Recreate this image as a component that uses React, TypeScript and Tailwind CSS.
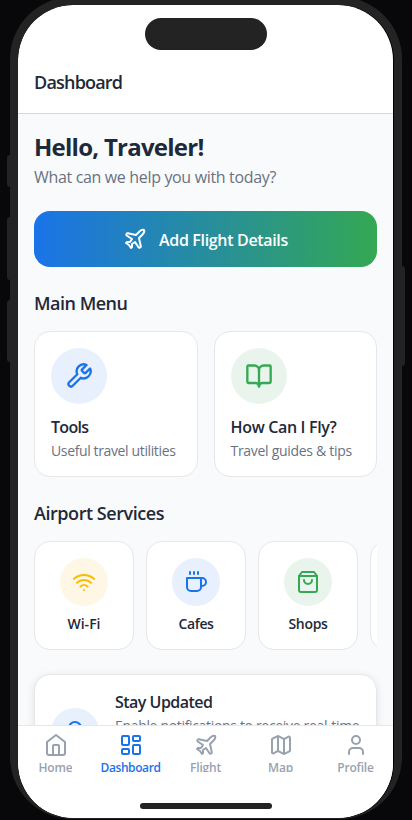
import type { ReactNode } from 'react';

const ICONS: Record<string, string[]> = {
  plane: [
    'M17.8 19.2 16 11l3.5-3.5C21 6 21.5 4 21 3c-1-.5-3 0-4.5 1.5L13 8 4.8 6.2c-.5-.1-.9.1-1.1.5l-.3.5c-.2.5-.1 1 .3 1.3L9 12l-2 3H4l-1 1 3 2 2 3 1-1v-3l3-2 3.5 5.3c.3.4.8.5 1.3.3l.5-.2c.4-.3.6-.7.5-1.2z',
  ],
  wrench: [
    'M14.7 6.3a1 1 0 0 0 0 1.4l1.6 1.6a1 1 0 0 0 1.4 0l3.77-3.77a6 6 0 0 1-7.94 7.94l-6.91 6.91a2.12 2.12 0 0 1-3-3l6.91-6.91a6 6 0 0 1 7.94-7.94l-3.76 3.76z',
  ],
  book: [
    'M12 7v14',
    'M3 18a1 1 0 0 1-1-1V4a1 1 0 0 1 1-1h5a4 4 0 0 1 4 4 4 4 0 0 1 4-4h5a1 1 0 0 1 1 1v13a1 1 0 0 1-1 1h-6a3 3 0 0 0-3 3 3 3 0 0 0-3-3z',
  ],
  wifi: ['M12 20h.01', 'M2 8.82a15 15 0 0 1 20 0', 'M5 12.859a10 10 0 0 1 14 0', 'M8.5 16.429a5 5 0 0 1 7 0'],
  coffee: ['M17 8h1a4 4 0 1 1 0 8h-1', 'M3 8h14v9a4 4 0 0 1-4 4H7a4 4 0 0 1-4-4Z', 'M6 2v2', 'M10 2v2', 'M14 2v2'],
  bag: ['M6 2 3 6v14a2 2 0 0 0 2 2h14a2 2 0 0 0 2-2V6l-3-4Z', 'M3 6h18', 'M16 10a4 4 0 0 1-8 0'],
  bell: ['M6 8a6 6 0 0 1 12 0c0 7 3 9 3 9H3s3-2 3-9', 'M10.3 21a1.94 1.94 0 0 0 3.4 0'],
  home: ['m3 9 9-7 9 7v11a2 2 0 0 1-2 2H5a2 2 0 0 1-2-2z', 'M9 22V13a1 1 0 0 1 1-1h4a1 1 0 0 1 1 1v9'],
  dashboard: [
    'M4 3h5a1 1 0 0 1 1 1v7a1 1 0 0 1-1 1H4a1 1 0 0 1-1-1V4a1 1 0 0 1 1-1z',
    'M15 3h5a1 1 0 0 1 1 1v3a1 1 0 0 1-1 1h-5a1 1 0 0 1-1-1V4a1 1 0 0 1 1-1z',
    'M15 12h5a1 1 0 0 1 1 1v7a1 1 0 0 1-1 1h-5a1 1 0 0 1-1-1v-7a1 1 0 0 1 1-1z',
    'M4 16h5a1 1 0 0 1 1 1v3a1 1 0 0 1-1 1H4a1 1 0 0 1-1-1v-3a1 1 0 0 1 1-1z',
  ],
  map: [
    'M14.106 5.553a2 2 0 0 0 1.788 0l3.659-1.83A1 1 0 0 1 21 4.619v12.764a1 1 0 0 1-.553.894l-4.553 2.277a2 2 0 0 1-1.788 0l-4.212-2.106a2 2 0 0 0-1.788 0l-3.659 1.83A1 1 0 0 1 3 19.381V6.618a1 1 0 0 1 .553-.894l4.553-2.277a2 2 0 0 1 1.788 0z',
    'M15 5.764v15',
    'M9 3.236v15',
  ],
  user: ['M19 21v-2a4 4 0 0 0-4-4H9a4 4 0 0 0-4 4v2', 'M12 3a4 4 0 1 0 0 8 4 4 0 0 0 0-8z'],
};

function Icon({ name, size = 24 }: { name: string; size?: number }) {
  return (
    <svg
      width={size}
      height={size}
      viewBox="0 0 24 24"
      fill="none"
      stroke="currentColor"
      strokeWidth={2}
      strokeLinecap="round"
      strokeLinejoin="round"
      className="shrink-0"
    >
      {ICONS[name].map((d) => (
        <path key={d} d={d} />
      ))}
    </svg>
  );
}

function MenuCard({ icon, tint, title, text }: { icon: string; tint: string; title: ReactNode; text: ReactNode }) {
  return (
    <div className="h-[146px] rounded-2xl border border-gray-200 bg-white p-4">
      <div className={`flex size-14 items-center justify-center rounded-full ${tint}`}>
        <Icon name={icon} size={28} />
      </div>
      <div className="mt-[11px] text-base leading-6 font-semibold text-gray-800">{title}</div>
      <div className="mt-px text-sm leading-[21px] text-gray-500">{text}</div>
    </div>
  );
}

function ServiceCard({ icon, tint, label }: { icon?: string; tint: string; label?: ReactNode }) {
  return (
    <div className="flex h-[109px] w-[100px] shrink-0 flex-col items-center rounded-2xl border border-gray-200 bg-white pt-4">
      <div className={`flex size-12 items-center justify-center rounded-full ${tint}`}>
        {icon && <Icon name={icon} />}
      </div>
      <div className="mt-[7px] text-sm leading-[21px] font-semibold text-gray-800">{label}</div>
    </div>
  );
}

function Tab({ icon, label, active = false }: { icon: string; label: ReactNode; active?: boolean }) {
  return (
    <div className={`flex w-[75px] flex-col items-center ${active ? 'text-[#1a73e8]' : 'text-gray-400'}`}>
      <Icon name={icon} />
      <div className="h-[15px] overflow-hidden text-xs leading-[21px] font-semibold whitespace-nowrap">{label}</div>
    </div>
  );
}

export default function App() {
  return (
    <div className="relative h-[820px] w-[412px] overflow-hidden bg-[#08080a] font-['Open_Sans','Noto_Sans',sans-serif] whitespace-nowrap">
      <div className="absolute top-[155px] left-[7px] h-8 w-2 rounded-l-[3px] bg-[#232323]" />
      <div className="absolute top-[217px] left-[7px] h-[63px] w-2 rounded-l-[3px] bg-[#232323]" />
      <div className="absolute top-[300px] left-[7px] h-[62px] w-2 rounded-l-[3px] bg-[#232323]" />
      <div className="absolute top-[266px] left-[397px] h-[100px] w-2 rounded-r-[3px] bg-[#232323]" />
      <div className="relative -mt-[3px] ml-[10px] h-[822px] w-[392px] rounded-[62px] bg-[#232323] pt-2 pl-2">
        <div className="h-[813px] w-[376px] overflow-hidden rounded-[55px] bg-black">
          <div className="relative flex h-[813px] w-[375px] flex-col overflow-hidden rounded-[55px] bg-white">
            <div className="absolute top-[13px] left-[127px] h-8 w-[122px] rounded-full bg-[#232323]" />
            <header className="flex h-[109px] shrink-0 items-end border-b border-[#d5d9dc] px-4 pb-[17px]">
              <h1 className="text-lg leading-[27px] font-semibold tracking-[-0.8px] text-gray-800">Dashboard</h1>
            </header>
            <main className="h-[611px] shrink-0 overflow-hidden bg-[#f9fafc] px-4 pt-[15px]">
              <h2 className="text-2xl leading-9 font-bold tracking-[-0.75px] text-gray-800">Hello, Traveler!</h2>
              <p className="text-base leading-6 tracking-[-0.34px] text-gray-500">What can we help you with today?</p>
              <button className="mt-[22px] flex h-14 w-full items-center justify-center gap-3 rounded-2xl bg-linear-to-r/srgb from-[#1a73e8] to-[#34a853] text-base font-semibold text-white">
                <Icon name="plane" />
                <span className="mt-0.5 tracking-[-0.33px]">Add Flight Details</span>
              </button>
              <h3 className="mt-[23px] text-lg leading-[27px] font-semibold tracking-[-0.5px] text-gray-800">Main Menu</h3>
              <div className="mt-[14px] grid grid-cols-2 gap-4">
                <MenuCard
                  icon="wrench"
                  tint="bg-[#e8f0fe] text-[#1a73e8]"
                  title={<span className="tracking-[-0.7px]">Tools</span>}
                  text={<span className="tracking-[-0.37px]">Useful travel utilities</span>}
                />
                <MenuCard
                  icon="book"
                  tint="bg-[#e9f5ec] text-[#34a853]"
                  title={<span className="tracking-[-0.33px]">How Can I Fly?</span>}
                  text={<span className="tracking-[-0.3px]">Travel guides &amp; tips</span>}
                />
              </div>
              <h3 className="mt-[23px] text-lg leading-[27px] font-semibold tracking-[-0.45px] text-gray-800">Airport Services</h3>
              <div className="mt-[14px] flex gap-3 overflow-hidden">
                <ServiceCard icon="wifi" tint="bg-[#fff7e5] text-[#fbbc05]" label={<span className="tracking-[0px]">Wi-Fi</span>} />
                <ServiceCard icon="coffee" tint="bg-[#e8f0fe] text-[#1a73e8]" label={<span className="tracking-[-0.4px]">Cafes</span>} />
                <ServiceCard icon="bag" tint="bg-[#e9f5ec] text-[#34a853]" label={<span className="tracking-[-0.3px]">Shops</span>} />
                <ServiceCard tint="" />
              </div>
              <section className="mt-6 flex h-[116px] items-center gap-4 rounded-2xl border border-gray-200 bg-white px-4 shadow-[0_2px_8px_rgba(0,0,0,0.1)]">
                <div className="flex size-12 shrink-0 items-center justify-center rounded-full bg-[#e8f0fe] text-[#1a73e8]">
                  <Icon name="bell" />
                </div>
                <div className="self-start pt-[15px]">
                  <div className="text-base leading-6 font-semibold tracking-[-0.52px] text-gray-800">Stay Updated</div>
                  <div className="mt-px text-sm leading-[21px] tracking-[-0.33px] text-gray-500">Enable notifications to receive real-time</div>
                </div>
              </section>
            </main>
            <nav className="flex h-[93px] shrink-0 border-t border-gray-200 bg-white pt-[7px]">
              <Tab icon="home" label={<span className="tracking-[-0.2px]">Home</span>} />
              <Tab icon="dashboard" active label={<span className="tracking-[-0.4px]">Dashboard</span>} />
              <Tab icon="plane" label={<span className="tracking-[-0.2px]">Flight</span>} />
              <Tab icon="map" label={<span className="tracking-[-0.2px]">Map</span>} />
              <Tab icon="user" label={<span className="tracking-[-0.2px]">Profile</span>} />
            </nav>
            <div className="absolute bottom-[9px] left-[122px] h-1.5 w-[132px] rounded-full bg-[#232323]" />
          </div>
        </div>
      </div>
    </div>
  );
}
